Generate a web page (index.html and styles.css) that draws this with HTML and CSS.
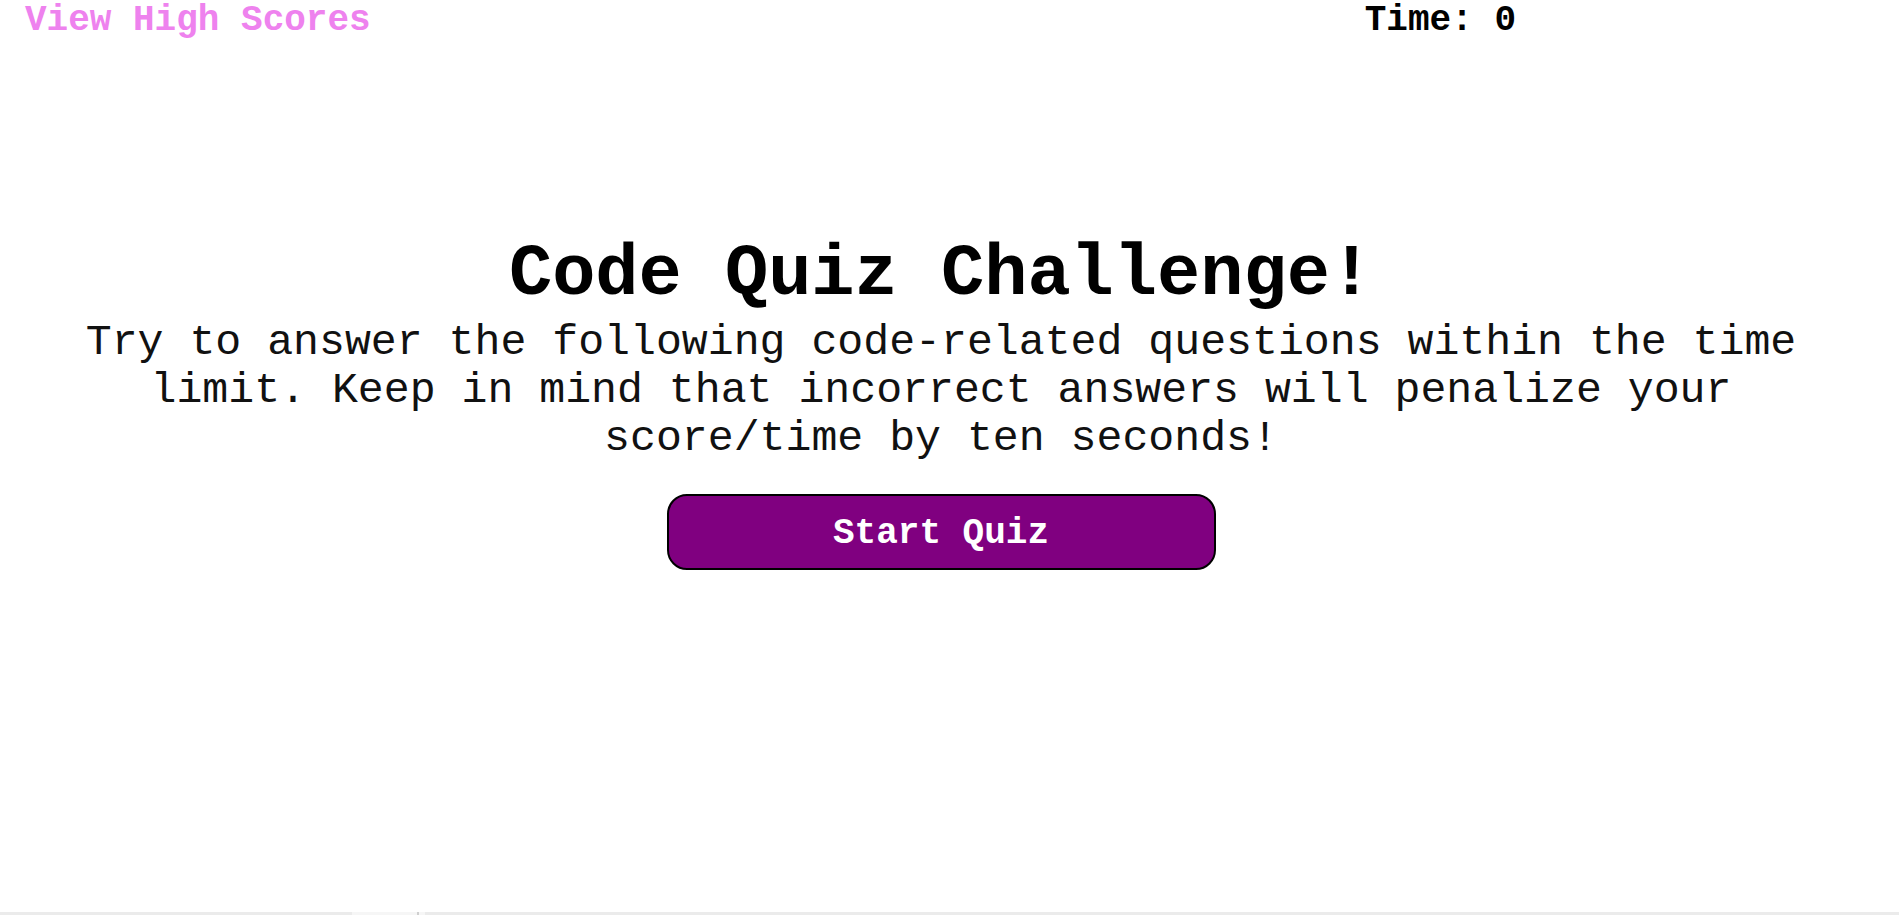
FILE: index.html
```html
<!DOCTYPE html>
<html lang="en">
<head>
<meta charset="utf-8">
<title>Code Quiz</title>
<link rel="stylesheet" href="styles.css">
</head>
<body>
<header class="topbar">
  <a class="scores-link" href="#">View High Scores</a>
  <div class="timer">Time: <span class="timer-value">0</span></div>
</header>
<main class="intro">
  <h1 class="intro-title">Code Quiz Challenge!</h1>
  <p class="intro-text">Try to answer the following code-related questions within the time limit. Keep in mind that incorrect answers will penalize your score/time by ten seconds!</p>
  <button class="start-btn" type="button">Start Quiz</button>
</main>
<div class="bottom-strip">
  <div class="strip-seg strip-a"></div>
  <div class="strip-seg strip-b"></div>
  <div class="strip-seg strip-c"></div>
  <div class="strip-seg strip-d"></div>
  <div class="strip-seg strip-e"></div>
</div>
</body>
</html>
```
FILE: styles.css
```css
html, body {
  margin: 0;
  padding: 0;
  background: #ffffff;
}

body {
  font-family: "Liberation Mono", "Courier New", monospace;
  color: #000;
  min-height: 100vh;
  display: flex;
  flex-direction: column;
}

.topbar {
  display: flex;
  align-items: flex-start;
  padding: 0 0 0 25px;
  height: 41px;
}

.scores-link {
  font-size: 36px;
  font-weight: bold;
  color: #ee82ee;
  text-decoration: none;
  line-height: 41px;
}

.timer {
  margin-left: auto;
  margin-right: 383px;
  font-size: 36px;
  font-weight: bold;
  line-height: 41px;
}

.intro {
  display: flex;
  flex-direction: column;
  align-items: center;
  padding: 194px 57px 0 40px;
  text-align: center;
}

.intro-title {
  margin: 0;
  font-size: 72px;
  font-weight: bold;
  line-height: 80px;
}

.intro-text {
  margin: 4px 0 0;
  font-size: 43.2px;
  font-weight: normal;
  line-height: 48px;
  color: #111;
}

.start-btn {
  margin-top: 31px;
  width: 549px;
  height: 76px;
  background: #800080;
  color: #fff;
  border: 2px solid #000;
  border-radius: 20px;
  font-family: "Liberation Mono", "Courier New", monospace;
  font-size: 36px;
  font-weight: bold;
  padding: 2px 0 0;
}

.bottom-strip {
  margin-top: auto;
  height: 3px;
  display: flex;
}

.strip-seg {
  height: 3px;
}

.strip-a {
  width: 352px;
  background: #ebebeb;
}

.strip-b {
  width: 65px;
  background: #f6f6f6;
}

.strip-c {
  width: 2px;
  background: #cfcfcf;
}

.strip-d {
  width: 6px;
  background: #f6f6f6;
}

.strip-e {
  flex: 1;
  background: #ebebeb;
}
```
